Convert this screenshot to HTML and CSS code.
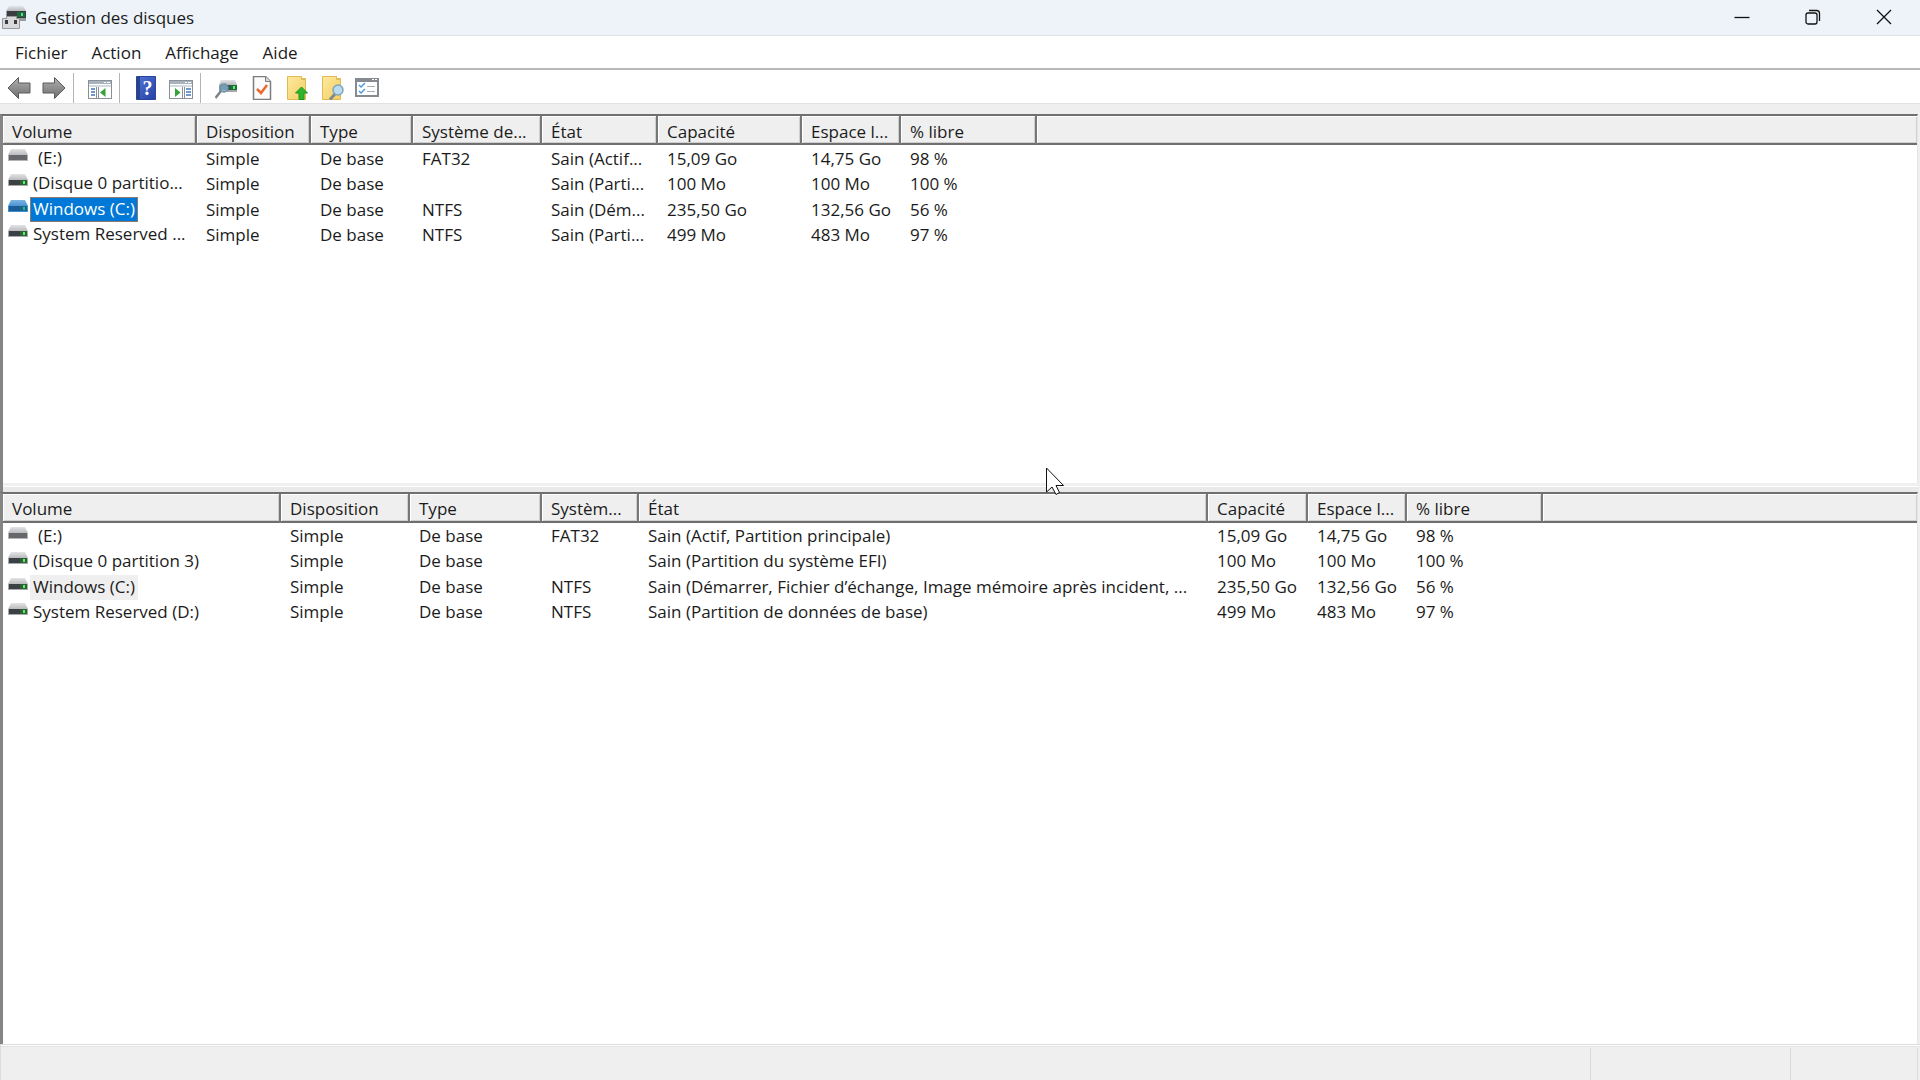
FILE: index.html
```html
<!DOCTYPE html>
<html lang="fr">
<head>
<meta charset="UTF-8" />
<meta name="viewport" content="width=device-width, initial-scale=1" />
<title>Gestion des disques</title>
<link rel="stylesheet" href="styles.css">
</head>
<body>
  <svg class="defs" aria-hidden="true">
    <defs>
      <linearGradient id="steel" x1="0" y1="0" x2="0" y2="1"><stop offset="0" stop-color="#e4e4e6"/><stop offset="1" stop-color="#b9babd"/></linearGradient>
      <linearGradient id="blueSteel" x1="0" y1="0" x2="0" y2="1"><stop offset="0" stop-color="#7db4e2"/><stop offset="1" stop-color="#4a92d2"/></linearGradient>
      <linearGradient id="arrowFill" x1="0" y1="0" x2="0" y2="1"><stop offset="0" stop-color="#b0b0b0"/><stop offset="1" stop-color="#6e6e6e"/></linearGradient>
      <linearGradient id="bookFill" x1="0" y1="0" x2="1" y2="1"><stop offset="0" stop-color="#5474d6"/><stop offset="1" stop-color="#2440a4"/></linearGradient>
      <linearGradient id="noteFill" x1="0" y1="0" x2="1" y2="1"><stop offset="0" stop-color="#fde9a0"/><stop offset="1" stop-color="#f4cf62"/></linearGradient>
    </defs>
    <symbol id="drive" viewBox="0 0 20 13">
      <path d="M3 0h14l3 6H0z" fill="url(#steel)"/>
      <path d="M0 6h20v6H0z" fill="#a9aaad"/>
      <path d="M1 6h18v5H1z" fill="#3b4045"/>
      <path d="M12 6h7v5h-7z" fill="#2c6335"/>
      <path d="M15 7h2v3h-2z" fill="#5df06a"/>
    </symbol>
    <symbol id="drive-usb" viewBox="0 0 20 13">
      <path d="M3 0h14l3 6H0z" fill="url(#steel)"/>
      <path d="M0 6h20v6H0z" fill="#b4b4b7"/>
      <path d="M1 6h18v5H1z" fill="#66676b"/>
    </symbol>
    <symbol id="drive-selected" viewBox="0 0 20 13">
      <path d="M3 0h14l3 6H0z" fill="url(#blueSteel)"/>
      <path d="M0 6h20v6H0z" fill="#3f8fd4"/>
      <path d="M1 6h18v5H1z" fill="#1c5c96"/>
      <path d="M12 6h7v5h-7z" fill="#176a86"/>
      <path d="M15 7h2v3h-2z" fill="#2fb0a0"/>
    </symbol>
  </svg>

  <header class="titlebar">
    <svg class="app-icon" viewBox="0 0 24 24" aria-hidden="true">
      <path d="M7 0h14l3 5H4z" fill="url(#steel)"/>
      <path d="M4 5h20v10H4z" fill="#9a9b9e"/>
      <path d="M5 5h19v7H5z" fill="#3a3e42"/>
      <path d="M15 6h8v5h-8z" fill="#1f6a3a"/>
      <path d="M19 7h2v3h-2z" fill="#4fe08a"/>
      <path d="M.5 12.500h4v-2h10v2h3v10H.5z" fill="#d9d9dc" stroke="#98989b"/>
      <path d="M3 14h3v4H3zM12 14h3v4h-3z" fill="#3c3c3e"/>
    </svg>
    <h1>Gestion des disques</h1>
    <div class="window-buttons">
      <button type="button" aria-label="Réduire"><svg viewBox="0 0 16 16"><path d="M.5 8.500h15"/></svg></button>
      <button type="button" aria-label="Niveau inférieur"><svg viewBox="0 0 16 16"><rect x="1" y="4" width="11" height="11" rx="2"/><path d="M4 1.500h7.500a3 3 0 0 1 3 3V12"/></svg></button>
      <button type="button" aria-label="Fermer"><svg viewBox="0 0 16 16"><path d="M1 1l14 14M15 1L1 15"/></svg></button>
    </div>
  </header>

  <nav class="menubar">
    <button type="button">Fichier</button>
    <button type="button">Action</button>
    <button type="button">Affichage</button>
    <button type="button">Aide</button>
  </nav>

  <div class="toolbar" role="toolbar" aria-label="Outils">
    <button type="button" aria-label="Précédent"><svg viewBox="0 0 24 24"><path d="M1 12L11.500 1.500V7H23v10H11.500v5.500z" fill="url(#arrowFill)" stroke="#5a5a5a" stroke-linejoin="round"/></svg></button>
    <button type="button" aria-label="Suivant"><svg viewBox="0 0 24 24"><path d="M23 12L12.500 1.500V7H1v10h11.500v5.500z" fill="url(#arrowFill)" stroke="#5a5a5a" stroke-linejoin="round"/></svg></button>
    <span class="separator"></span>
    <button type="button" aria-label="Afficher l'arborescence"><svg viewBox="0 0 24 24">
      <rect x=".5" y="4.500" width="23" height="18" fill="#fff" stroke="#8b9097"/>
      <path d="M1 5h22v3H1z" fill="#a9b3c0"/><path d="M16 6h2v1h-2zM19 6h3v1h-3z" fill="#fff"/><path d="M1 9h22v2H1z" fill="#d4dae2"/>
      <path d="M8.500 11v11M10.500 11v11" stroke="#8b9097"/>
      <path d="M3 13h4M3 16h4M3 19h4" stroke="#3f78b8" stroke-width="1.500"/>
      <path d="M17.500 12v9L12 16.500z" fill="#35a336"/>
    </svg></button>
    <span class="separator"></span>
    <button type="button" aria-label="Aide"><svg viewBox="0 0 24 24">
      <path d="M2.500.5h19v23h-19z" fill="url(#bookFill)" stroke="#2b459c"/>
      <path d="M3 1h3v22H3z" fill="#27428f"/>
      <text x="13.500" y="19" class="help-mark">?</text>
    </svg></button>
    <button type="button" aria-label="Afficher le volet d'actions"><svg viewBox="0 0 24 24">
      <rect x=".5" y="4.500" width="23" height="18" fill="#fff" stroke="#8b9097"/>
      <path d="M1 5h22v3H1z" fill="#a9b3c0"/><path d="M16 6h2v1h-2zM19 6h3v1h-3z" fill="#fff"/><path d="M1 9h22v2H1z" fill="#d4dae2"/>
      <path d="M13.500 11v11M15.500 11v11" stroke="#8b9097"/>
      <path d="M17 13h5M17 16h5M17 19h5" stroke="#3f78b8" stroke-width="1.500"/>
      <path d="M6 12v9l5.500-4.500z" fill="#35a336"/>
    </svg></button>
    <span class="separator"></span>
    <button type="button" aria-label="Analyser les disques"><svg viewBox="0 0 24 24">
      <path d="M6 4h14l2 5H4z" fill="url(#steel)"/>
      <path d="M4 9h18v7H4z" fill="#a4a6aa"/><path d="M5 9h17v5H5z" fill="#3c4654"/>
      <path d="M15 9h7v5h-7z" fill="#1d7034"/><path d="M18 10h2v3h-2z" fill="#5cf07a"/>
      <circle cx="9" cy="12" r="4" fill="#8cc0dc" fill-opacity=".7" stroke="#6f90a4" stroke-width="1.500"/>
      <path d="M6 15l-5.500 7" stroke="#7d838a" stroke-width="2.500"/>
    </svg></button>
    <button type="button" aria-label="Vérifier"><svg viewBox="0 0 24 24">
      <path d="M3.500.5h12l5 5v18h-17z" fill="#fbfbfb" stroke="#7e7e80" stroke-width="1.500"/>
      <path d="M15.500.5v5h5" fill="#d8d8da" stroke="#7e7e80"/>
      <path d="M7 13l4 4 6-8" fill="none" stroke="#ea6a2c" stroke-width="2.500"/>
    </svg></button>
    <button type="button" aria-label="Niveau supérieur"><svg viewBox="0 0 24 24">
      <path d="M2.500.5h14v2h4v21h-18z" fill="url(#noteFill)" stroke="#e0ba55"/>
      <path d="M16.500.5v3h4" fill="none" stroke="#e0ba55"/>
      <path d="M16.500 11l6 6H19v6.500h-5V17h-3.500z" fill="#2fb52c" stroke="#249422"/>
    </svg></button>
    <button type="button" aria-label="Rechercher"><svg viewBox="0 0 24 24">
      <path d="M2.500.5h14v2h4v21h-18z" fill="url(#noteFill)" stroke="#e0ba55"/>
      <path d="M16.500.5v3h4" fill="none" stroke="#e0ba55"/>
      <path d="M15 18l-5 5.500" stroke="#818a90" stroke-width="3"/>
      <circle cx="18" cy="14" r="5" fill="#b9dcf0" stroke="#7fa5bb" stroke-width="1.500"/>
    </svg></button>
    <button type="button" aria-label="Propriétés"><svg viewBox="0 0 24 24">
      <rect x="1" y="3" width="22" height="17" fill="#fff" stroke="#858a90" stroke-width="2"/>
      <path d="M0 2h24v4H0z" fill="#858a90"/><path d="M17 3h2v1h-2zM20 3h2v1h-2z" fill="#fff"/>
      <path d="M4 9l2 2 4-4M4 15l2 2 4-4" fill="none" stroke="#4a9be0" stroke-width="1.500"/>
      <path d="M12 10.500h8M12 15.500h8" stroke="#a9adb2"/>
    </svg></button>
  </div>

  <main class="content">
    <section class="pane pane-top" aria-label="Liste des volumes">
      <table>
        <colgroup><col class="w194"><col class="w114"><col class="w102"><col class="w129"><col class="w116"><col class="w144"><col class="w99"><col class="w136"><col></colgroup>
        <thead>
          <tr><th>Volume</th><th>Disposition</th><th>Type</th><th>Système de...</th><th>État</th><th>Capacité</th><th>Espace l...</th><th>% libre</th><th></th></tr>
        </thead>
        <tbody>
          <tr><td><div class="volume"><svg class="drive"><use href="#drive-usb"/></svg><span class="unnamed">(E:)</span></div></td><td>Simple</td><td>De base</td><td>FAT32</td><td>Sain (Actif...</td><td>15,09 Go</td><td>14,75 Go</td><td>98 %</td><td></td></tr>
          <tr><td><div class="volume"><svg class="drive"><use href="#drive"/></svg><span>(Disque 0 partitio...</span></div></td><td>Simple</td><td>De base</td><td></td><td>Sain (Parti...</td><td>100 Mo</td><td>100 Mo</td><td>100 %</td><td></td></tr>
          <tr><td><div class="volume selected"><svg class="drive"><use href="#drive-selected"/></svg><span>Windows (C:)</span></div></td><td>Simple</td><td>De base</td><td>NTFS</td><td>Sain (Dém...</td><td>235,50 Go</td><td>132,56 Go</td><td>56 %</td><td></td></tr>
          <tr><td><div class="volume"><svg class="drive"><use href="#drive"/></svg><span>System Reserved ...</span></div></td><td>Simple</td><td>De base</td><td>NTFS</td><td>Sain (Parti...</td><td>499 Mo</td><td>483 Mo</td><td>97 %</td><td></td></tr>
        </tbody>
      </table>
    </section>
    <div class="splitter"></div>
    <section class="pane pane-bottom" aria-label="Détail des volumes">
      <table>
        <colgroup><col class="w278"><col class="w129"><col class="w132"><col class="w97"><col class="w569"><col class="w100"><col class="w99"><col class="w136"><col></colgroup>
        <thead>
          <tr><th>Volume</th><th>Disposition</th><th>Type</th><th>Systèm...</th><th>État</th><th>Capacité</th><th>Espace l...</th><th>% libre</th><th></th></tr>
        </thead>
        <tbody>
          <tr><td><div class="volume"><svg class="drive"><use href="#drive-usb"/></svg><span class="unnamed">(E:)</span></div></td><td>Simple</td><td>De base</td><td>FAT32</td><td>Sain (Actif, Partition principale)</td><td>15,09 Go</td><td>14,75 Go</td><td>98 %</td><td></td></tr>
          <tr><td><div class="volume"><svg class="drive"><use href="#drive"/></svg><span>(Disque 0 partition 3)</span></div></td><td>Simple</td><td>De base</td><td></td><td>Sain (Partition du système EFI)</td><td>100 Mo</td><td>100 Mo</td><td>100 %</td><td></td></tr>
          <tr><td><div class="volume inactive"><svg class="drive"><use href="#drive"/></svg><span>Windows (C:)</span></div></td><td>Simple</td><td>De base</td><td>NTFS</td><td>Sain (Démarrer, Fichier d’échange, Image mémoire après incident, ...</td><td>235,50 Go</td><td>132,56 Go</td><td>56 %</td><td></td></tr>
          <tr><td><div class="volume"><svg class="drive"><use href="#drive"/></svg><span>System Reserved (D:)</span></div></td><td>Simple</td><td>De base</td><td>NTFS</td><td>Sain (Partition de données de base)</td><td>499 Mo</td><td>483 Mo</td><td>97 %</td><td></td></tr>
        </tbody>
      </table>
    </section>
  </main>

  <footer class="statusbar">
    <span class="status-main"></span>
    <span class="status-wide"></span>
    <span class="status-narrow"></span>
  </footer>

  <svg class="pointer" viewBox="0 0 20 28" aria-hidden="true"><path d="M.5 1v24l5.500-5 4 7.500 3.500-2-3.500-7h7.500z" fill="#fff" stroke="#111"/></svg>
</body>
</html>
```
FILE: styles.css
```css
* {margin: 0; padding: 0; box-sizing: border-box;}
body {
  font-family: 'Segoe UI', 'Open Sans', 'Noto Sans', sans-serif;
  font-size: 17px;
  line-height: 24px;
  color: #1b1b1b;
  background: #efefef;
  height: 100vh;
  display: flex;
  flex-direction: column;
  overflow: hidden;
  position: relative;
}
button {
  font: inherit;
  color: inherit;
  background: none;
  border: none;
}
svg {
  display: block;
}
.defs {
  position: absolute;
  width: 0;
  height: 0;
}

/* Title bar */
.titlebar {
  display: flex;
  align-items: center;
  height: 36px;
  padding-left: 2px;
  background: #eef3f9;
  border-bottom: 1px solid #dde0e4;
}
.app-icon {
  width: 24px;
  height: 24px;
}
h1 {
  flex: 1;
  margin-left: 9px;
  font-size: 17px;
  font-weight: 400;
}
.window-buttons {
  display: flex;
  align-self: stretch;
}
.window-buttons button {
  display: grid;
  place-items: center;
  width: 71px;
  padding: 0 2px 2px 0;
}
.window-buttons svg {
  width: 16px;
  height: 16px;
  fill: none;
  stroke: #111;
  stroke-width: 1.3;
}

/* Menus and tools */
.menubar {
  display: flex;
  height: 34px;
  padding-left: 3px;
  background: #fff;
  border-bottom: 2px solid #b9b9b9;
}
.menubar button {
  padding: 1px 12px 0;
}
.toolbar {
  display: flex;
  align-items: center;
  height: 34px;
  padding: 2px 1px 0;
  background: #fff;
  border-bottom: 1px solid #e2e2e2;
}
.toolbar button {
  display: grid;
  place-items: center;
  width: 35px;
  height: 32px;
}
.toolbar svg {
  width: 24px;
  height: 24px;
}
.separator {
  width: 1px;
  height: 30px;
  margin: 0 8px 0 2px;
  background: #b4b4b4;
}
.help-mark {
  font-family: 'Liberation Serif', serif;
  font-size: 20px;
  font-weight: 700;
  fill: #fff;
  text-anchor: middle;
}

/* Volume lists */
.content {
  flex: 1;
  display: flex;
  flex-direction: column;
  min-height: 0;
  padding: 10px 2px 0 0;
}
.pane {
  background: #fff;
  border-top: 2px solid #6f6f6f;
  border-left: 3px solid #858585;
  border-right: 1px solid #e6e6e6;
  overflow: hidden;
}
.pane-top {
  flex: 2 1 0;
}
.pane-bottom {
  flex: 3 1 0;
}
.splitter {
  height: 9px;
  background: linear-gradient(#f0f0f0 3px, #fff 3px, #fff 4px, #e9e9e9 4px);
  border-left: 3px solid #858585;
}
table {
  width: 100%;
  table-layout: fixed;
  border-collapse: separate;
  border-spacing: 0;
}
th {
  height: 29px;
  padding: 4px 0 0 9px;
  font-weight: 400;
  text-align: left;
  white-space: nowrap;
  line-height: 22px;
  background: #efefef;
  border-right: 2px solid #777;
  border-bottom: 2px solid #6f6f6f;
  box-shadow: inset 1px 1px #fff, inset -1px -1px #cfcfcf;
}
th:last-child {
  border-right: none;
}
td {
  height: 26px;
  padding: 1px 0 0 9px;
  white-space: nowrap;
}
tr:nth-child(even) td {
  height: 25px;
  padding-top: 0;
}
td:first-child {
  padding-left: 5px;
}
.volume {
  display: flex;
  align-items: center;
  height: 25px;
}
.drive {
  width: 20px;
  height: 13px;
  margin: 0 2px 6px 0;
}
.volume span {
  height: 25px;
  padding: 0 3px;
}
.volume .unnamed {
  padding-left: 8px;
}
.selected span {
  color: #fff;
  background: #0078d7;
  outline: 1px solid #8a7a70;
  outline-offset: -1px;
}
.inactive span {
  background: #efefef;
}
.w97 {width: 97px;}
.w99 {width: 99px;}
.w100 {width: 100px;}
.w102 {width: 102px;}
.w114 {width: 114px;}
.w116 {width: 116px;}
.w129 {width: 129px;}
.w132 {width: 132px;}
.w136 {width: 136px;}
.w144 {width: 144px;}
.w194 {width: 194px;}
.w278 {width: 278px;}
.w569 {width: 569px;}

/* Status bar */
.statusbar {
  display: flex;
  height: 36px;
  padding: 3px 2px 0 0;
  border-top: 1px solid #dcdcdc;
  border-left: 1px solid #dcdcdc;
  box-shadow: inset 0 1px #fff, inset 0 2px #e2e2e2;
}
.statusbar span {
  border-right: 1px solid #dadada;
}
.status-main {
  flex: 1;
}
.status-wide {
  width: 200px;
}
.status-narrow {
  width: 127px;
}

/* Mouse pointer over the splitter */
.pointer {
  position: absolute;
  left: 1046px;
  top: 467px;
  width: 20px;
  height: 28px;
}
```
